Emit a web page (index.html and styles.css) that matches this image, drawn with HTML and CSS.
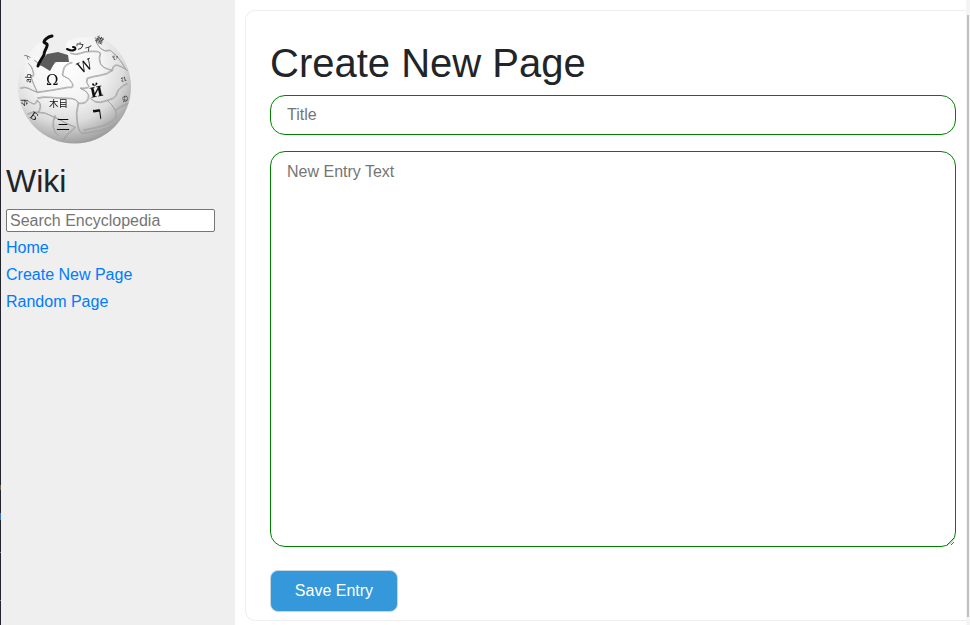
FILE: index.html
```html
<!DOCTYPE html>
<html lang="en">
<head>
<meta charset="utf-8">
<title>Create New Page</title>
<link rel="stylesheet" href="styles.css">
</head>
<body>
<div class="page">
  <div class="edge"></div>
  <aside class="sidebar">
    <svg class="logo" viewBox="6 25 140 137" width="140" height="137" role="img" aria-label="Wikipedia globe">
      <defs>
        <radialGradient id="ball" cx="0.42" cy="0.3" r="0.78">
          <stop offset="0" stop-color="#ffffff"/>
          <stop offset="0.42" stop-color="#f4f4f4"/>
          <stop offset="0.66" stop-color="#dcdcdc"/>
          <stop offset="0.87" stop-color="#a8a8a8"/>
          <stop offset="1" stop-color="#7e7e7e"/>
        </radialGradient>
        <clipPath id="ballclip"><circle cx="74.5" cy="87" r="56.5"/></clipPath>
        <filter id="soft" x="-5%" y="-5%" width="110%" height="110%"><feGaussianBlur stdDeviation="0.35"/></filter>
      </defs>
      <g filter="url(#soft)">
        <circle cx="74.5" cy="87" r="56.5" fill="url(#ball)"/>
        <g clip-path="url(#ballclip)">
          <use href="#seams" class="seam-light" transform="translate(0.7 0.7)"/>
          <g id="seams" class="seam">
            <path d="M72 62Q64 64 63 70T62 75Q70 78 72 83T68 87Q52 90 37 92"/>
            <path d="M70 53Q76 55 80 53T92 51 100 53Q98 58 100 63T112 70Q107 74 100 75T87 78Q85 82 88 85T80 88"/>
            <path d="M80 88Q90 92 88 98T78 103Q75 112 77 123T83 133"/>
            <path d="M95 37Q96 44 100 48T110 50Q117 55 122 63"/>
            <path d="M112 70Q112 66 115 65T127 70"/>
            <path d="M90 98Q95 103 100 102T113 98Q116 96 117 92T127 83"/>
            <path d="M107 100Q112 104 115 110T113 120Q106 125 97 127T83 130"/>
            <path d="M115 110Q120 106 128 103"/>
            <path d="M37 100Q41 103 40 107T38 112Q45 112 50 115T57 118Q65 123 75 127"/>
            <path d="M37 98Q43 96 50 97T67 98 78 103"/>
            <path d="M55 115Q52 121 53 127T58 135"/>
            <path d="M20 88Q24 86 28 88T37 92"/>
            <path d="M28 63Q32 66 33 72T30 75Q33 84 37 92"/>
            <path d="M20 100Q25 98 30 102T37 100"/>
            <path d="M27 114Q32 111 38 112"/>
            <path d="M75 127Q66 134 62 141M83 133Q90 132 100 130T115 122"/>
            <path d="M122 63Q124 68 127 70"/>
            <path d="M57 60Q47 72 34 60"/>
          </g>
        </g>
        <path class="hole" d="M50 26 104 26 98 35 88 37 77 38 67 41 66 46 68 54 58 52 49 53 46 49 43 53 39 64 40 52 44 44 50 38Z"/>
        <path class="dark" d="M39 65 47 54 58 52 68 55 69 62 55 62 50 71 42 66Z"/>
        <path class="ink" d="M52 36c-4 1-7 3-8 6 1 2 4 1 3 4-1 4-3 5-3 9-2 4-5 7-6 11"/>
        <path class="ink thin" d="M67 49c2 1 5 2 7 1 2 0 2-3-1-3"/>
        <text class="glyph serif" x="46" y="85" font-size="15">Ω</text>
        <text class="glyph serif" transform="translate(80 74) rotate(-24)" font-size="15">W</text>
        <text class="glyph serif bold" transform="translate(91 98) rotate(-12)" font-size="14">Й</text>
        <text class="glyph cjk" x="49" y="107" font-size="9.5">木目</text>
        <text class="glyph serif bold" transform="translate(94 120) rotate(-8)" font-size="18">ר</text>
        <text class="glyph cjk" transform="translate(75 49) rotate(6)" font-size="9">ウィ</text>
        <text class="glyph cjk" transform="translate(95 41) rotate(25)" font-size="8">維</text>
        <text class="glyph cjk" transform="translate(31 83) rotate(-88)" font-size="8">ab</text>
        <text class="glyph cjk tone" transform="translate(28 60) rotate(-45)" font-size="7">λ</text>
        <text class="glyph cjk" transform="translate(21 106)" font-size="10">ক</text>
        <text class="glyph cjk" transform="translate(112 56) rotate(60)" font-size="8">ವಿ</text>
        <text class="glyph cjk" transform="translate(121 77) rotate(80)" font-size="8">ವ</text>
        <text class="glyph cjk" transform="translate(122 96) rotate(80)" font-size="8">ଉ</text>
        <text class="glyph serif" transform="translate(29 117) rotate(35)" font-size="10">Б</text>
        <text class="glyph serif wide" x="56" y="129" font-size="14">三</text>
      </g>
    </svg>
    <h2 class="brand">Wiki</h2>
    <form class="search">
      <input class="search-input" type="text" placeholder="Search Encyclopedia">
    </form>
    <nav class="nav">
      <a class="nav-link" href="#">Home</a>
      <a class="nav-link" href="#">Create New Page</a>
      <a class="nav-link" href="#">Random Page</a>
    </nav>
  </aside>
  <main class="main">
    <form class="card">
      <h1 class="heading">Create New Page</h1>
      <input class="field title-field" type="text" placeholder="Title">
      <textarea class="field text-field" placeholder="New Entry Text"></textarea>
      <button class="save" type="button">Save Entry</button>
    </form>
  </main>
  <div class="scrollbar"><div class="thumb"></div></div>
</div>
</body>
</html>
```
FILE: styles.css
```css
* { box-sizing: border-box; }
html, body { margin: 0; height: 100%; overflow: hidden; }
body {
  font-family: "Liberation Sans", Arial, sans-serif;
  font-size: 16px;
  line-height: 1.5;
  color: #212529;
  background: #fff;
}
.page { display: flex; height: 625px; }
.edge {
  flex: 0 0 1px;
  background: linear-gradient(to bottom,
    #23242c 0, #23242c 485px, #6b5a48 485px, #6b5a48 490px,
    #23242c 490px, #23242c 513px, #3d6fc4 513px, #3d6fc4 520px,
    #23242c 520px, #23242c 552px, #77777c 552px, #77777c 553px,
    #23242c 553px, #23242c 600px, #77777c 600px, #77777c 601px,
    #23242c 601px);
}
.sidebar {
  flex: 0 0 234px;
  background: #efefef;
  padding: 25px 0 0 5px;
}
.logo { display: block; }
.seam { fill: none; stroke: #a2a2a2; stroke-width: 0.8; }
.seam-light { fill: none; stroke: #ffffff; stroke-width: 0.5; }
.hole { fill: #efefef; }
.dark { fill: #5c5c5c; }
.ink { fill: none; stroke: #0c0c0c; stroke-width: 3; stroke-linecap: round; }
.thin { stroke-width: 2; }
.glyph { fill: #111; }
.bold { font-weight: 700; }
.serif { font-family: "DejaVu Serif", "Liberation Serif", "Noto Sans CJK JP", serif; }
.cjk { font-family: "Noto Sans CJK JP", "Noto Sans", sans-serif; }
.tone { fill: #555; }
.brand {
  margin: 0 0 9px;
  font-size: 32px;
  font-weight: 400;
  line-height: 1.2;
}
.search { display: flex; }
.search-input {
  width: 209px;
  height: 23px;
  padding: 1px 3px;
  border: 1px solid #767676;
  border-radius: 2px;
  background: #fff;
  font: 16px "Liberation Sans", Arial, sans-serif;
}
.search-input::placeholder, .field::placeholder { color: #757575; opacity: 1; }
.nav { display: flex; flex-direction: column; gap: 3px; margin-top: 4px; }
.nav-link { color: #007bff; text-decoration: none; }
.main { flex: 1; min-width: 0; padding: 10px 0 4px 10px; }
.card {
  display: flex;
  flex-direction: column;
  align-items: flex-start;
  height: 100%;
  padding: 28px 10px 0 24px;
  border: 1px solid #eeeeee;
  border-right: 0;
  border-radius: 10px 0 0 10px;
  background: #fff;
}
.heading {
  margin: 0 0 8px;
  font-size: 40px;
  font-weight: 400;
  line-height: 1.2;
}
.field {
  display: block;
  width: 100%;
  padding: 8px 16px;
  border: 1px solid #008000;
  border-radius: 15px;
  background: #fff;
  color: #495057;
  font: 16px/1.5 "Liberation Sans", Arial, sans-serif;
  outline: none;
}
.title-field { height: 40px; margin-bottom: 16px; }
.text-field { height: 396px; margin-bottom: 23px; }
.save {
  width: 128px;
  height: 42px;
  border: 1px solid #c8d6e0;
  border-radius: 8px;
  background: #3498db;
  color: #fff;
  font: 16px "Liberation Sans", Arial, sans-serif;
}
.scrollbar {
  flex: 0 0 4px;
  padding: 15px 1px 8px 1px;
  background: #f4f4f4;
}
.thumb { height: 100%; background: #c1c1c1; }
```
